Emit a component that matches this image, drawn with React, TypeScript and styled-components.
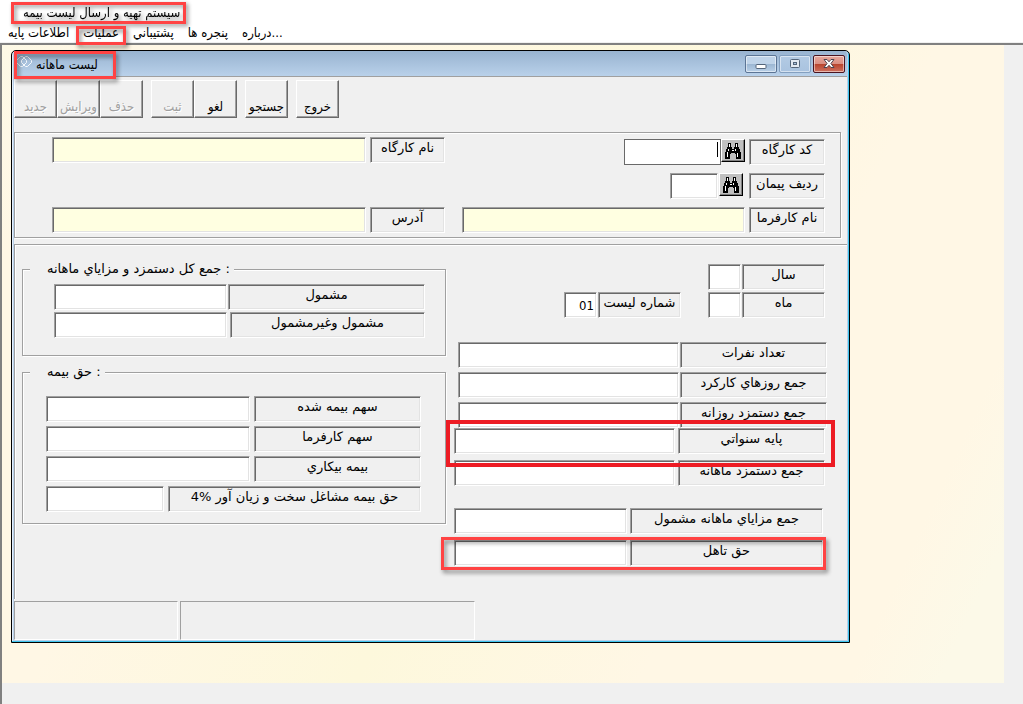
import React, { useId } from "react";
import styled, { createGlobalStyle, css } from "styled-components";

const color = {
  face: "#f0f0f0",
  shade: "#a0a0a0",
  dark: "#696969",
  light: "#e3e3e3",
  mark: "#ff4343",
  strongMark: "#ed1c24",
};

const condensed = `"DejaVu Sans Condensed", "DejaVu Sans", sans-serif`;

const GlobalStyle = createGlobalStyle`
  *, *::before, *::after { box-sizing: border-box; }
  body {
    margin: 0;
    background: ${color.face};
    color: #000;
    font: 13px/18px "DejaVu Sans", sans-serif;
  }
  button, input { font: inherit; color: inherit; }
`;

const sunken = css`
  border: 1px solid;
  border-color: ${color.shade} #fff #fff ${color.shade};
  box-shadow: inset 1px 1px 0 ${color.dark}, inset -1px -1px 0 ${color.light};
`;

const etched = css`
  border: 1px solid ${color.shade};
  box-shadow: 1px 1px 0 #fff, inset 1px 1px 0 #fff;
`;

const Page = styled.div`
  display: flex;
  flex-direction: column;
  min-height: 100vh;
`;

const Header = styled.header`
  padding-top: 2px;
  background: #fff;
  border-bottom: 1px solid ${color.face};
  font-family: ${condensed};
`;

const AppTitle = styled.h1`
  width: fit-content;
  margin: 0 0 0 11px;
  padding: 0 3px 0 9px;
  border: 3px solid ${color.mark};
  font-size: 13px;
  font-weight: normal;
  line-height: 16px;
  filter: drop-shadow(2px 2px 2px rgba(0, 0, 0, 0.45));
`;

const MenuBar = styled.nav`
  display: flex;
  gap: 14px;
  padding-left: 8px;
`;

const MenuItem = styled.button`
  position: relative;
  padding: 0;
  border: 0;
  background: none;
  line-height: 18px;
  white-space: nowrap;
`;

const Mark = styled.span<{ $inset: string; $width?: number; $strong?: boolean }>`
  position: absolute;
  z-index: 2;
  inset: ${(p) => p.$inset};
  ${(p) => p.$width && `width: ${p.$width}px;`}
  pointer-events: none;
  border: ${(p) =>
    p.$strong ? `4px solid ${color.strongMark}` : `3px solid ${color.mark}`};
  filter: ${(p) =>
    p.$strong ? "none" : "drop-shadow(2px 3px 2px rgba(0, 0, 0, 0.45))"};
`;

const Desktop = styled.main`
  flex: 1;
  border: solid #808080;
  border-width: 2px 0 0 2px;
  padding-right: 19px;
`;

const Wallpaper = styled.div`
  padding: 5px 154px 40px 9px;
  background: linear-gradient(
    115deg,
    #fdf9e6 0%,
    #fff7e5 8%,
    #fff7e5 25%,
    #fdf8dc 50%,
    #fff7e5 72%,
    #fff7e5 88%,
    #fcf9e8 95%
  );
`;

const Window = styled.section`
  border: 1px solid #000;
  border-radius: 5px 5px 0 0;
  padding: 0 2px 2px;
  background: #b9d1ea;
  box-shadow: inset -1px -1px 0 #3fc5ee, inset 1px 0 0 #e4eefa;
`;

const TitleBar = styled.div`
  display: flex;
  align-items: center;
  position: relative;
  height: 25px;
  padding: 0 2px;
  background: linear-gradient(#98b3d0, #b9d1ea);
  border-radius: 4px 4px 0 0;
  & > svg {
    margin-bottom: 3px;
  }
`;

const WindowTitle = styled.h2`
  flex: 1;
  margin: 3px 0 0 4px;
  font-family: ${condensed};
  font-size: 13px;
  font-weight: normal;
  line-height: 16px;
`;

const WindowButtons = styled.div`
  display: flex;
  gap: 2px;
`;

const WindowButton = styled.button<{ $kind?: "close" | "off" }>`
  display: grid;
  place-items: center;
  width: 32px;
  height: 18px;
  padding: 0;
  border: 1px solid #5c7595;
  border-radius: 2px;
  box-shadow: inset 0 0 0 1px rgba(255, 255, 255, 0.5);
  background: linear-gradient(#c0d4e9 50%, #9bb6d2 50%, #b9d0e8);
  ${(p) =>
    p.$kind === "off" &&
    css`
      border-color: #84a0c0;
      background: linear-gradient(#b3cbe4, #a9c3df);
    `}
  ${(p) =>
    p.$kind === "close" &&
    css`
      border-color: #4a1420;
      background: linear-gradient(#e7a79c, #da8f83 48%, #b8432c 50%, #cf7160);
    `}
`;

const Body = styled.form`
  background: ${color.face};
  border-top: 1px solid ${color.shade};
`;

const Toolbar = styled.div`
  display: flex;
  gap: 8px;
  padding: 3px 0 14px;
`;

const ButtonGroup = styled.div`
  display: flex;
`;

const ToolButton = styled.button`
  width: 43px;
  height: 38px;
  padding: 15px 0 0;
  border: 1px solid;
  border-color: #fff ${color.dark} ${color.dark} #fff;
  box-shadow: inset -1px -1px 0 ${color.shade};
  background: ${color.face};
  font-family: ${condensed};
  line-height: 20px;
  white-space: nowrap;
  &:disabled {
    color: ${color.shade};
    text-shadow: 1px 1px 0 #fff;
  }
`;

const WorkshopPanel = styled.div`
  ${etched}
  display: grid;
  grid-template-columns: 430fr 395fr;
  margin-right: 6px;
  padding: 4px 0;
`;

const NameColumn = styled.div`
  display: flex;
  flex-direction: column;
  justify-content: space-between;
  padding-left: 37px;
`;

const CodeColumn = styled.div`
  display: flex;
  flex-direction: column;
  gap: 8px;
  padding: 2px 15px 0 17px;
`;

const Row = styled.div<{ $gap?: number }>`
  display: flex;
  justify-content: flex-end;
  gap: ${(p) => p.$gap ?? 4}px;
`;

const FieldBox = styled.div<{ $gap: number }>`
  position: relative;
  display: flex;
  gap: ${(p) => p.$gap}px;
`;

const Caption = styled.label<{ $width: number }>`
  ${sunken}
  flex: none;
  width: ${(p) => p.$width}px;
  height: 26px;
  padding-top: 1px;
  text-align: center;
  white-space: nowrap;
`;

const TextBox = styled.input<{ $width?: number }>`
  ${sunken}
  ${(p) => (p.$width ? `width: ${p.$width}px;` : "flex: 1; min-width: 0; width: 0;")}
  height: 26px;
  padding: 0 2px;
  border-radius: 0;
  outline: 0;
  font-family: ${condensed};
  text-align: right;
  background: #fff;
  &:read-only {
    background: #ffffe1;
  }
`;

const FlatTextBox = styled(TextBox)`
  border: 1px solid ${color.dark};
  box-shadow: none;
`;

const CaretHost = styled.span`
  position: relative;
  display: flex;
  &::after {
    content: "";
    position: absolute;
    top: 3px;
    right: 3px;
    width: 1px;
    height: 15px;
    background: #000;
  }
`;

const SearchButton = styled.button`
  display: grid;
  place-items: center;
  width: 24px;
  height: 23px;
  padding: 0;
  border: 1px solid;
  border-color: #fff #000 #000 #fff;
  box-shadow: inset -1px -1px 0 #808080;
  background: #c0c0c0;
`;

const Lookup = styled.div<{ $gap: number }>`
  display: flex;
  gap: ${(p) => p.$gap}px;
`;

const ListPanel = styled.div`
  display: grid;
  grid-template-columns: 424fr 401fr;
  align-items: start;
  margin-top: 6px;
  padding: 14px 0 33px 7px;
  border: solid ${color.shade};
  border-width: 1px 0 0 1px;
  box-shadow: inset 1px 1px 0 #fff;
`;

const Groups = styled.div`
  display: flex;
  flex-direction: column;
  gap: 6px;
`;

const Group = styled.fieldset<{ $pad: string; $gap: number }>`
  ${etched}
  display: flex;
  flex-direction: column;
  gap: ${(p) => p.$gap}px;
  min-width: 0;
  margin: 0;
  padding: ${(p) => p.$pad};
`;

const Legend = styled.legend<{ $indent: number }>`
  margin-left: -${(p) => p.$indent}px;
  padding: 0 4px 0 17px;
  background: ${color.face};
  line-height: 20px;
`;

const Totals = styled.div`
  display: flex;
  flex-direction: column;
  gap: 22px;
  padding-top: 5px;
`;

const RowStack = styled.div<{ $gap: number; $pad: string }>`
  display: flex;
  flex-direction: column;
  gap: ${(p) => p.$gap}px;
  padding: ${(p) => p.$pad};
`;

const StatusBar = styled.footer`
  display: flex;
  gap: 2px;
  margin-top: 2px;
`;

const StatusCell = styled.div<{ $width: number }>`
  width: ${(p) => p.$width}px;
  height: 39px;
  border: 1px solid;
  border-color: ${color.shade} #fff #fff ${color.shade};
`;

type FieldProps = {
  caption: string;
  captionWidth: number;
  width?: number;
  gap?: number;
  value?: string;
  readOnly?: boolean;
  children?: React.ReactNode;
};

function Field({ caption, captionWidth, width, gap = 4, value, readOnly, children }: FieldProps) {
  const id = useId();
  return (
    <FieldBox $gap={gap}>
      <TextBox id={id} $width={width} readOnly={readOnly} defaultValue={value} />
      <Caption htmlFor={id} dir="rtl" $width={captionWidth}>
        {caption}
      </Caption>
      {children}
    </FieldBox>
  );
}

const Binoculars = () => (
  <svg width="18" height="18" viewBox="0 0 18 18" shapeRendering="crispEdges" aria-hidden="true">
    <path
      d="M4 1h3v4h1v2h2V5h1V1h3v4h1v2h1v3h1v7h-5v-5h-1v-1H7v1H6v5H1v-7h1V7h1V5h1z"
      fill="#000"
    />
    <path
      d="M5 2h1v3H5zM12 2h1v3h-1zM4 7h1v2H4zM11 7h1v2h-1zM3 10h1v5H3zM13 11h1v4h-1zM8 8h2v1H8z"
      fill="#fff"
    />
  </svg>
);

const RingsIcon = () => (
  <svg width="16" height="14" viewBox="0 0 16 14" fill="none" stroke="#f4f8fc" aria-hidden="true">
    <path d="M4.500 1.500h2l4 4v2l-4 4h-2l-4-4v-2zM9.500 1.500h2l4 4v2l-4 4h-2l-4-4v-2z" />
  </svg>
);

const MinimizeIcon = () => (
  <svg width="12" height="12" viewBox="0 0 12 12" aria-hidden="true">
    <rect x="1" y="6.500" width="10" height="4" rx="1" fill="#fff" stroke="#54657a" />
  </svg>
);

const MaximizeIcon = () => (
  <svg width="12" height="12" viewBox="0 0 12 12" fill="#e3eaf2" stroke="#54657a" aria-hidden="true">
    <rect x="1.500" y="1.500" width="9" height="8" rx="1" />
    <rect x="4.500" y="4.500" width="3" height="2" fill="#a9c3df" />
  </svg>
);

const CloseIcon = () => (
  <svg width="12" height="12" viewBox="0 0 12 12" aria-hidden="true">
    <path
      d="M1 1.500h3l2 2.300 2-2.300h3L7.900 5.500 11 9.500H8L6 7.300 4 9.500H1l3.100-4z"
      fill="#fff"
      stroke="#4d4450"
    />
  </svg>
);

const menu = ["اطلاعات پايه", "عمليات", "پشتيباني", "پنجره ها", "درباره..."];

const tools = [
  [
    { text: "جديد", disabled: true },
    { text: "ويرايش", disabled: true },
    { text: "حذف", disabled: true },
  ],
  [
    { text: "ثبت", disabled: true },
    { text: "لغو", disabled: false },
  ],
  [{ text: "جستجو", disabled: false }],
  [{ text: "خروج", disabled: false }],
];

export default function App() {
  return (
    <Page>
      <GlobalStyle />
      <Header>
        <AppTitle>سيستم تهيه و ارسال ليست بيمه</AppTitle>
        <MenuBar>
          {menu.map((text) => (
            <MenuItem key={text} type="button">
              {text}
              {text === "عمليات" && <Mark $inset="2px -7px -3px" />}
            </MenuItem>
          ))}
        </MenuBar>
      </Header>
      <Desktop>
        <Wallpaper>
          <Window aria-label="ليست ماهانه">
            <TitleBar>
              <RingsIcon />
              <WindowTitle>ليست ماهانه</WindowTitle>
              <WindowButtons>
                <WindowButton type="button" aria-label="minimize">
                  <MinimizeIcon />
                </WindowButton>
                <WindowButton type="button" aria-label="maximize" $kind="off">
                  <MaximizeIcon />
                </WindowButton>
                <WindowButton type="button" aria-label="close" $kind="close">
                  <CloseIcon />
                </WindowButton>
              </WindowButtons>
              <Mark $inset="0 auto -3px 0" $width={102} />
            </TitleBar>
            <Body onSubmit={(e) => e.preventDefault()}>
              <Toolbar>
                {tools.map((group, i) => (
                  <ButtonGroup key={i}>
                    {group.map((tool) => (
                      <ToolButton key={tool.text} type="button" disabled={tool.disabled}>
                        {tool.text}
                      </ToolButton>
                    ))}
                  </ButtonGroup>
                ))}
              </Toolbar>
              <WorkshopPanel>
                <NameColumn>
                  <Field caption="نام کارگاه" captionWidth={75} readOnly />
                  <Field caption="آدرس" captionWidth={75} readOnly />
                </NameColumn>
                <CodeColumn>
                  <Row>
                    <Lookup $gap={0}>
                      <CaretHost>
                        <FlatTextBox id="workshop-code" $width={97} />
                      </CaretHost>
                      <SearchButton type="button" aria-label="جستجو">
                        <Binoculars />
                      </SearchButton>
                    </Lookup>
                    <Caption htmlFor="workshop-code" dir="rtl" $width={76}>
                      کد کارگاه
                    </Caption>
                  </Row>
                  <Row $gap={6}>
                    <Lookup $gap={1}>
                      <TextBox id="contract-row" $width={48} />
                      <SearchButton type="button" aria-label="جستجو">
                        <Binoculars />
                      </SearchButton>
                    </Lookup>
                    <Caption htmlFor="contract-row" dir="rtl" $width={76}>
                      رديف پيمان
                    </Caption>
                  </Row>
                  <Field caption="نام کارفرما" captionWidth={76} readOnly />
                </CodeColumn>
              </WorkshopPanel>
              <ListPanel>
                <Groups>
                  <Group $gap={2} $pad="5px 20px 17px 31px">
                    <Legend $indent={24}>جمع کل دستمزد و مزاياي ماهانه :</Legend>
                    <Field caption="مشمول" captionWidth={197} gap={1} />
                    <Field caption="مشمول وغيرمشمول" captionWidth={195} gap={3} />
                  </Group>
                  <Group $gap={4} $pad="14px 24px 11px 23px">
                    <Legend $indent={16}>حق بيمه :</Legend>
                    <Field caption="سهم بيمه شده" captionWidth={167} />
                    <Field caption="سهم کارفرما" captionWidth={167} />
                    <Field caption="بيمه بيکاري" captionWidth={167} />
                    <Field caption="حق بيمه مشاغل سخت و زيان آور %4" captionWidth={253} />
                  </Group>
                </Groups>
                <Totals>
                  <RowStack $gap={2} $pad="0 22px 2px 0">
                    <Row>
                      <Field caption="سال" captionWidth={83} width={33} gap={1} />
                    </Row>
                    <Row $gap={27}>
                      <Field caption="شماره ليست" captionWidth={83} width={33} gap={1} value="01" />
                      <Field caption="ماه" captionWidth={83} width={33} gap={1} />
                    </Row>
                  </RowStack>
                  <div>
                    <RowStack $gap={4} $pad="0 20px 0 12px">
                      <Field caption="تعداد نفرات" captionWidth={147} gap={1} />
                      <Field caption="جمع روزهاي کارکرد" captionWidth={147} gap={1} />
                      <Field caption="جمع دستمزد روزانه" captionWidth={147} gap={1} />
                    </RowStack>
                    <RowStack $gap={6} $pad="0 22px 0 8px">
                      <Field caption="پايه سنواتي" captionWidth={147} gap={3}>
                        <Mark $strong $inset="-8px -10px -13px -8px" />
                      </Field>
                      <Field caption="جمع دستمزد ماهانه" captionWidth={147} gap={3} />
                    </RowStack>
                  </div>
                  <RowStack $gap={6} $pad="0 24px 0 8px">
                    <Field caption="جمع مزاياي ماهانه مشمول" captionWidth={193} gap={3} />
                    <Field caption="حق تاهل" captionWidth={193} gap={3}>
                      <Mark $inset="-3px -3px -4px -13px" />
                    </Field>
                  </RowStack>
                </Totals>
              </ListPanel>
              <StatusBar>
                <StatusCell $width={164} />
                <StatusCell $width={295} />
              </StatusBar>
            </Body>
          </Window>
        </Wallpaper>
      </Desktop>
    </Page>
  );
}
